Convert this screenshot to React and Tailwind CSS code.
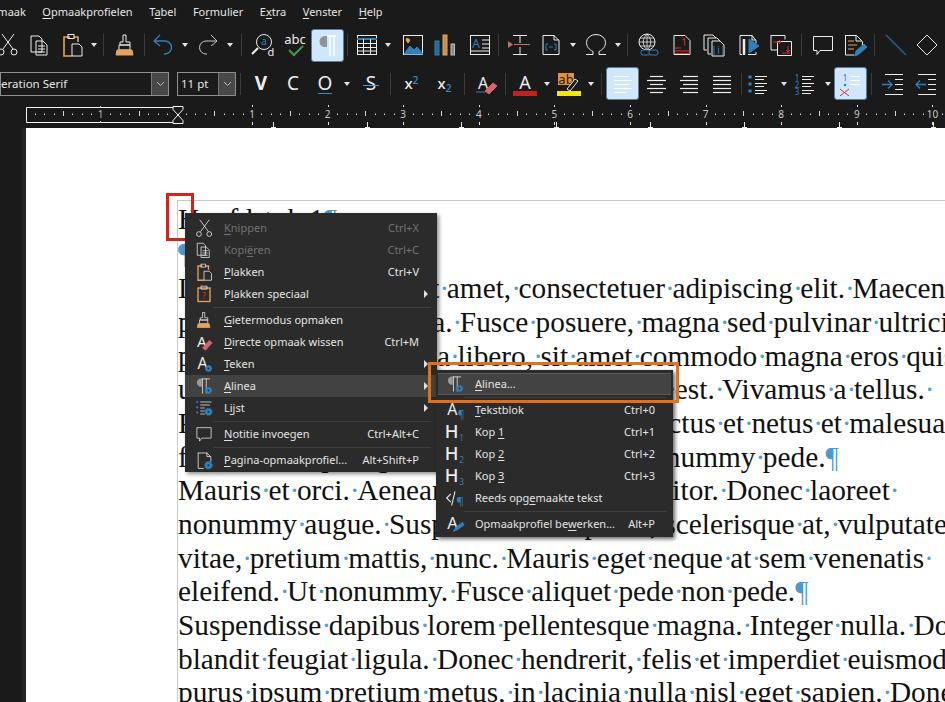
import React from "react";

const W = "#ececec";
const B = "#2f80bb";
const O = "#e3a35c";
const R = "#d8322c";
const ui = { fontFamily: "'Noto Sans', 'Open Sans', sans-serif" };

const S = ({ s = 24, w, h, children, vb }) => (
  <svg width={w || s} height={h || s} viewBox={vb || "0 0 24 24"} fill="none" stroke={W} strokeWidth="1" className="block flex-none">
    {children}
  </svg>
);
const T = ({ x, y, size = 12, fill = W, children, weight, italic, anchor = "middle" }) => (
  <text x={x} y={y} fontSize={size} fill={fill} stroke="none" textAnchor={anchor} fontWeight={weight} fontStyle={italic ? "italic" : undefined} fontFamily="'Noto Sans', sans-serif">
    {children}
  </text>
);
const Gear = ({ x = 18, y = 18, r = 3.6 }) => (
  <g>
    <circle cx={x} cy={y} r={r} fill={B} stroke={B} strokeWidth="1.6" strokeDasharray="1.4 1.2" />
    <circle cx={x} cy={y} r={r * 0.3} fill="#16324a" stroke="none" />
  </g>
);

const Cut = () => (<S><path d="M6 1 17 16M18 1 7 16" /><circle cx="5" cy="19" r="3" /><circle cx="18" cy="19" r="3" /></S>);
const Copy = () => (<S><path d="M3 3h8l3 3v13H3zM8 8h7l4 4v10H8zM10 13h7M10 16h7M10 19h7" fill="#1a1a1a" /></S>);
const Paste = () => (<S><path d="M10 4H4v19h8" stroke={O} strokeWidth="1.6" /><path d="M14 4h4v5" stroke={O} strokeWidth="1.6" /><rect x="8" y="1.500" width="6" height="4" stroke={W} /><path d="M12 11h7l3 3v9H12z" fill="#1a1a1a" /></S>);
const Brush = () => (<S><path d="M10 2h3v7h4v3H7V9h3z" /><path d="M6 12h11v5H6z" /><path d="M4 17h15l1 5H3z" fill={O} stroke={O} /></S>);
const Undo = () => (<S><path d="M3 8h11a6 6 0 0 1 0 13h-1M3 8l6-6M3 8l6 5" stroke={B} strokeWidth="1.4" /></S>);
const Redo = () => (<S><path d="M21 8H10a6 6 0 0 0 0 13h1M21 8l-6-6M21 8l-6 5" stroke="#c9c9c9" /></S>);
const Find = () => (<S><circle cx="13" cy="9" r="7.500" /><path d="M7 15 1 21" strokeWidth="2.200" /><T x="13" y="12" size="10" fill={B}>a</T><T x="20" y="23" size="11">d</T></S>);
const Abc = () => (<S><T x="12" y="11" size="13">abc</T><path d="M6 17l5 5 9-9" stroke="#3f9a4f" strokeWidth="2" /></S>);
const Pil = () => (<S><path d="M11 3H9a5.500 5.500 0 0 0 0 11h2z" fill="#8f9296" stroke="none" /><path d="M11 3h9M14 3v20M18 3v20" stroke="#fff" strokeWidth="1.500" /></S>);
const Table = () => (<S><rect x="2.500" y="2.500" width="19" height="19" /><path d="M2 6h20" stroke={B} strokeWidth="2" /><path d="M2 10.500h20M2 14.500h20M2 18h20M8.500 6v15M15.500 6v15" /></S>);
const Img = () => (<S><rect x="2.500" y="2.500" width="19" height="19" /><path d="M3 21l6-8 4 4 3-3 6 7z" fill={B} stroke={B} /><path d="M6 5l3 2-2 3-2-3z" fill={O} stroke={O} /></S>);
const Chart = () => (<S><rect x="2" y="8" width="4" height="14" stroke={B} fill={B} fillOpacity=".75" /><rect x="10" y="2" width="4" height="20" stroke={O} fill={O} fillOpacity=".85" /><rect x="18" y="11" width="3.500" height="11" stroke="#bbb" fill="#888" /></S>);
const TextBox = () => (<S><rect x="2.500" y="2.500" width="19" height="19" /><T x="8" y="15" size="12" fill={B}>A</T><path d="M14 7h7M14 11h7M14 15h7M3 18h18" /></S>);
const HGap = () => (<S><path d="M6 2.500h14M6 21.500h14M13 2v8M13 14v8" /><path d="M7 11.500h16" stroke="#c96b70" /><path d="M1 8l5 3.500-5 3.500z" fill="#c96b70" stroke="none" /></S>);
const Field = () => (<S><path d="M4 2.500h11l5 5v14H4z" /><path d="M15 2v5h5" /><path d="M7 11v6h2M17 11v6h-2M7 11h2M15 11h2M10 14h4" stroke={B} /></S>);
const Omega = () => (<S><path d="M2 21.500h7v-3c-4-2-6.500-5-6.500-9a9.500 8 0 0 1 19 0c0 4-2.500 7-6.500 9v3h7" /></S>);
const Globe = () => (<S><circle cx="10" cy="9" r="8" /><path d="M2 9h16M3 5h14M3 13h14M10 1v16M10 1c-5 5-5 11 0 16M10 1c5 5 5 11 0 16" strokeWidth=".8" /><rect x="4" y="17" width="9" height="5" rx="2" fill="#1a1a1a" stroke={B} /><rect x="12" y="17" width="9" height="5" rx="2" fill="#1a1a1a" stroke={B} /></S>);
const Foot = () => (<S><path d="M4 2.500h11l5 5v14H4z" /><T x="14" y="13" size="10" fill={R}>1</T><path d="M4 15h7M5 18h15M5 20.500h15" stroke={R} /></S>);
const End = () => (<S><path d="M1 2h9l3 3M1 2v15h3M5 5h9l3 3M5 5v16h3M9 8h8l4 4v11H9z" /><T x="15.500" y="21" size="10" fill={B}>i</T><path d="M11 13v9M20 13v9" stroke={B} /></S>);
const Mark = () => (<S><path d="M12 2.500H4v19h2M12 2.500h4l4 5v3M16 2v5h4M20 19v2.500H12" /><path d="M8 6v16" strokeWidth="2.500" /><path d="M13 6l10 7-10 7z" fill={B} stroke={B} /></S>);
const Cross = () => (<S><path d="M2 2.500h14v4M2 2v15h7" /><path d="M8.500 8.500h14v14h-14z" /><path d="M4 9h8l-2-2M12 9l-2 2M19 13v6l-2-2M19 19l2-2M13 20h8" stroke={R} /></S>);
const Comment = () => (<S><path d="M2.500 3.500h19v14H9l-3 4v-4H2.500z" /></S>);
const Track = () => (<S><path d="M2.500 2.500h11l6 6v6M19 8h-6V2M2.500 2v20h9" /><path d="M5 8h6M5 12h9M5 16h6" stroke={O} /><path d="M12 23l1-5 8-7 3 3-8 7z" fill={B} stroke={B} /></S>);
const LineI = () => (<S><path d="M2 2l20 20" stroke="#1e5f8c" strokeWidth="1.600" /></S>);
const Diamond = () => (<S><path d="M12 2l10 10-10 10L2 12z" /></S>);

const Arrow = () => (<div className="w-[12px] flex-none flex justify-center"><div className="border-x-[3.5px] border-t-[4px] border-x-transparent border-t-[#e6e6e6]" /></div>);
const Sep = ({ w = 8 }) => (<div className="flex justify-center flex-none" style={{ width: w }}><div className="w-px h-[22px] bg-[#3a3a3a]" /></div>);
const Slot = ({ w = 32, children, active }) => (
  <div className={"flex-none h-[33px] flex items-center justify-center " + (active ? "bg-[#cfe6fb] border border-[#5c7f99] rounded-[3px]" : "")} style={{ width: w }}>
    {children}
  </div>
);
const Gap = ({ w }) => <div className="flex-none" style={{ width: w }} />;

const Lines = ({ items, color = "#f0f0f0" }) => (
  <S>
    {items.map(([a, b, y], i) => (<path key={i} d={`M${a} ${y + 0.5}H${b}`} stroke={color} strokeWidth="1.200" />))}
  </S>
);
const AL = () => <Lines color="#ffffff" items={[[3, 18, 4], [3, 21, 8], [3, 18, 12], [3, 21, 16], [3, 15, 20]]} />;
const AC = () => <Lines items={[[6, 19, 4], [3, 22, 8], [6, 19, 12], [3, 22, 16], [6, 19, 20]]} />;
const AR = () => <Lines items={[[6, 21, 4], [3, 21, 8], [6, 21, 12], [3, 21, 16], [6, 21, 20]]} />;
const AJ = () => <Lines items={[[3, 21, 4], [3, 21, 8], [3, 21, 12], [3, 21, 16], [3, 21, 20]]} />;
const Bul = () => (<S><circle cx="4" cy="5" r="1.800" fill={B} stroke="none" /><circle cx="4" cy="12" r="1.800" fill={B} stroke="none" /><circle cx="4" cy="19" r="1.800" fill={B} stroke="none" /><path d="M9 4.500h12M9 7.500h9M9 11.500h12M9 14.500h9M9 18.500h12M9 21.500h9" /></S>);
const Num = () => (<S><T x="4" y="9" size="8" fill={B}>1</T><T x="4" y="16" size="8" fill={B}>2</T><T x="4" y="23" size="8" fill={B}>3</T><path d="M9 4.500h12M9 7.500h9M9 11.500h12M9 14.500h9M9 18.500h12M9 21.500h9" /></S>);
const NoNum = () => (<S><T x="6" y="9" size="8" fill={B}>1</T><circle cx="6" cy="13" r="1.300" fill={B} stroke="none" /><path d="M1 17l9 7M10 17l-9 7" stroke={R} /><path d="M11 4.500h10M11 8.500h10M11 12.500h10" stroke="#fff" /></S>);
const Indent = () => (<S><path d="M4 2.500h18M14 7.500h8M14 12.500h8M14 17.500h8M4 22.500h18" /><path d="M1 12.500h10M7 8.500l4 4-4 4" stroke={B} strokeWidth="1.300" /></S>);
const Outdent = () => (<S><path d="M4 2.500h18M14 7.500h8M14 12.500h8M14 17.500h8M4 22.500h18" /><path d="M12 12.500H2M6 8.500l-4 4 4 4" stroke={B} strokeWidth="1.300" /></S>);
const Erase = () => (<S><T x="9" y="17" size="16">A</T><path d="M2 20h9" stroke={B} /><path d="M11 19l8-8 4 3-8 8z" fill="#d9656b" stroke="#d9656b" /></S>);
const FontA = () => (<S><T x="12" y="17" size="18">A</T><rect x="0" y="19" width="24" height="5" fill="#c5211c" stroke="none" /></S>);
const High = () => (<S><rect x="1" y="1" width="16" height="12" fill="#e0933c" stroke="none" /><T x="9" y="12" size="13" fill="#222">ab</T><path d="M10 17l8-10 3 2-8 10z" fill="#1a1a1a" /><rect x="0" y="19" width="24" height="5" fill="#f2e51a" stroke="none" /></S>);

const Combo = ({ w, text, clip }) => (
  <div className="flex-none h-[24px] flex border border-[#8f8f8f] overflow-hidden" style={{ width: w }}>
    <div className={"flex-1 whitespace-nowrap text-[11.500px] leading-[22px] text-[#e6e6e6] " + (clip ? "-ml-[16px]" : "pl-[3px]")}>{text}</div>
    <div className="w-[17px] flex-none bg-[#484848] border-l border-[#777] flex items-center justify-center">
      <svg width="9" height="6" viewBox="0 0 9 6" fill="none" stroke="#bdbdbd"><path d="M1 1l3.500 3.500L8 1" /></svg>
    </div>
  </div>
);

function Toolbar1() {
  return (
    <div className="h-[42px] flex items-center -ml-[8px] flex-none">
      <Slot><Cut /></Slot><Slot><Copy /></Slot><Slot><Paste /></Slot><Arrow /><Sep w={6} /><Gap w={3} />
      <Slot><Brush /></Slot><Sep w={6} /><Slot><Undo /></Slot><Arrow /><Gap w={1} /><Slot><Redo /></Slot><Arrow /><Sep w={10} /><Gap w={3} />
      <Slot w={28}><Find /></Slot><Gap w={2} /><Slot w={32}><Abc /></Slot><Slot w={33} active><Pil /></Slot><Sep w={6} /><Gap w={2} />
      <Slot w={30}><Table /></Slot><Arrow /><Gap w={3} /><Slot><Img /></Slot><Slot w={32}><Chart /></Slot><Gap w={2} /><Slot w={34}><TextBox /></Slot><Sep w={2} /><Gap w={4} />
      <Slot><HGap /></Slot><Slot><Field /></Slot><Arrow /><Gap w={2} /><Slot w={30}><Omega /></Slot><Gap w={1} /><Arrow /><Sep w={6} /><Gap w={3} />
      <Slot w={32}><Globe /></Slot><Slot w={33}><Foot /></Slot><Slot w={33}><End /></Slot><Slot w={33}><Mark /></Slot><Slot w={33}><Cross /></Slot><Sep w={8} /><Gap w={2} />
      <Slot w={32}><Comment /></Slot><Slot w={32}><Track /></Slot><Sep w={6} /><Gap w={3} /><Slot w={32}><LineI /></Slot><Slot w={30}><Diamond /></Slot>
    </div>
  );
}
function Toolbar2() {
  return (
    <div className="h-[33px] flex items-center flex-none mt-[1px]" style={ui}>
      <Combo w={169} clip text="Liberation Serif" /><Gap w={8} /><Combo w={59} text="11 pt" /><Sep w={8} />
      <Gap w={1} /><Slot w={32}><span className="text-[#eee] text-[19px] leading-none font-bold">V</span></Slot><Slot w={32}><span className="text-[#eee] text-[19px] leading-none">C</span></Slot>
      <Slot w={32}><span className="text-[#eee] text-[19px] leading-none border-b border-[#3a8cc6]">O</span></Slot><Arrow />
      <Gap w={4} /><Slot w={28}><span className="relative text-[#eee] text-[19px] leading-none">S<span className="absolute left-[-3px] right-[-3px] top-[11px] h-px bg-[#4a98cf]" /></span></Slot><Sep w={10} />
      <Slot w={33}><span className="text-[#eee] text-[15px] font-medium">x<sup className="text-[10px] text-[#3a8cc6] -top-[5px]">2</sup></span></Slot>
      <Slot w={33}><span className="text-[#eee] text-[15px] font-medium">x<sub className="text-[10px] text-[#3a8cc6]">2</sub></span></Slot><Sep w={6} /><Gap w={3} /><Slot w={31}><Erase /></Slot><Sep w={8} />
      <Slot w={31}><FontA /></Slot><Gap w={1} /><Arrow /><Slot w={32}><High /></Slot><Arrow /><Sep w={9} />
      <Slot w={33} active><AL /></Slot><Slot w={33}><AC /></Slot><Slot w={33}><AR /></Slot><Slot w={33}><AJ /></Slot><Sep w={6} />
      <Slot w={28}><Bul /></Slot><Gap w={6} /><Arrow /><Slot w={30}><Num /></Slot><Gap w={2} /><Arrow /><Slot w={33} active><NoNum /></Slot><Sep w={9} />
      <Slot w={33}><Indent /></Slot><Slot w={33}><Outdent /></Slot>
    </div>
  );
}

function Ruler() {
  const zero = 176.4, step = 75.6;
  const dots = [];
  for (let i = -20; i < 100; i++) {
    const x = zero + (i * step) / 8;
    if (x < 28 || x > 945 || i % 8 === 0) continue;
    dots.push(<rect key={i} x={Math.round(x)} y={i % 4 === 0 ? 11 : 13.5} width="1" height={i % 4 === 0 ? 5 : 1.5} fill="#d8d8d8" />);
  }
  const nums = [1, 2, 3, 4, 5, 6, 7, 8, 9, 10];
  const tabs = [273, 367, 461, 556, 650, 744, 839, 933];
  return (
    <svg width="945" height="28" viewBox="0 0 945 28" className="block flex-none" fill="none">
      <path d="M26.500 7.500H174M26.500 7.500V22.500H174" stroke="#f4f4f4" />
      {dots}
      <text x="100.500" y="18" fontSize="10" fill="#bdbdbd" textAnchor="middle" fontFamily="'Noto Sans',sans-serif">1</text>
      <path d="M100.500 6v2M100.500 21v2" stroke="#ccc" />
      {nums.map((n) => {
        const x = zero + n * step;
        return (
          <g key={n}>
            <path d={`M${Math.round(x) + 0.5} 5v2M${Math.round(x) + 0.5} 22v3`} stroke="#e0e0e0" />
            <text x={x} y="18" fontSize="10" fill="#c8c8c8" textAnchor="middle" fontFamily="'Noto Sans',sans-serif">{n}</text>
          </g>
        );
      })}
      {tabs.map((x) => (<path key={x} d={`M${x + 0.5} 22v5M${x - 2} 27.500h5`} stroke="#e8e8e8" />))}
      <path d="M173 6.500h10v3L173 20.500v3h10v-3L173 9.500z" stroke="#f4f4f4" fill="#1a1a1a" />
    </svg>
  );
}

const Dot = () => <span className="inline-block w-[7.33px] text-center text-[#4f9fcf]">·</span>;
const Pilc = () => <span className="text-[#4a9ad0]">¶</span>;
function Line({ text, mark, trail }) {
  const parts = text.split(" ");
  return (
    <div className="h-[33.67px] leading-[33.67px] whitespace-nowrap">
      {parts.map((p, i) => (
        <React.Fragment key={i}>
          {i > 0 && <Dot />}
          {p}
        </React.Fragment>
      ))}
      {trail ? <Dot /> : null}
      {mark ? <Pilc /> : null}
    </div>
  );
}
const para1 = [
  ["Lorem ipsum dolor sit amet, consectetuer adipiscing elit. Maecenas", false, false],
  ["porttitor congue massa. Fusce posuere, magna sed pulvinar ultricies,", false, false],
  ["purus lectus malesuada libero, sit amet commodo magna eros quis", false, false],
  ["urna. Nunc viverra imperdiet enim. Fusce est. Vivamus a tellus.", false, true],
  ["Pellentesque habitant morbi tristique senectus et netus et malesuada", false, false],
  ["fames ac turpis egestas. Proin pharetra nonummy pede.", true, false],
  ["Mauris et orci. Aenean nec lorem. In porttitor. Donec laoreet", false, true],
  ["nonummy augue. Suspendisse dui purus, scelerisque at, vulputate", false, true],
  ["vitae, pretium mattis, nunc. Mauris eget neque at sem venenatis", false, true],
  ["eleifend. Ut nonummy. Fusce aliquet pede non pede.", true, false],
  ["Suspendisse dapibus lorem pellentesque magna. Integer nulla. Donec", false, false],
  ["blandit feugiat ligula. Donec hendrerit, felis et imperdiet euismod,", false, false],
  ["purus ipsum pretium metus, in lacinia nulla nisl eget sapien. Donec", false, false],
];

const TeA = () => (<S s={18}><T x="10" y="19" size="21">A</T><Gear x={18} y={18} r={4} /></S>);
const ParaG = () => (<S s={18}><path d="M8 2a5 5 0 0 0 0 11h1V2z" fill="#9a9a9a" stroke="none" /><path d="M9 2.500h11M10 2v20M15 2v20" /><Gear x={18} y={18} r={4} /></S>);
const ListG = () => (<S s={18}><circle cx="3" cy="4" r="1.500" fill={B} stroke="none" /><circle cx="3" cy="11" r="1.500" fill={B} stroke="none" /><circle cx="3" cy="18" r="1.500" fill={B} stroke="none" /><path d="M7 4h15M7 8h13M7 12h6M7 16h6M7 20h6" /><Gear x={18} y={17} r={4.500} /></S>);
const DocG = () => (<S s={19}><path d="M4 2.500h11l5 5v6M15 2v5h5M4 2v20h7" /><Gear x={17} y={18} r={4.500} /></S>);
const EraseM = () => (<S s={18}><T x="9" y="18" size="20">A</T><path d="M10 20l9-10 4 3-9 10z" fill="#d9656b" stroke="#d9656b" /></S>);

const Mi = ({ icon, label, u, sc, arrow, dis, hi, boxed }) => {
  const color = dis ? "text-[#727272]" : "text-[#e4e4e4]";
  return (
    <div className={"flex items-center h-[22px] pr-[18px] relative " + color + " " + (hi ? "bg-[#424242] " : "") + (boxed ? "bg-[#434343] border-y border-[#5a5a5a] mx-[2px] " : "")}>
      <div className={"w-[36px] flex justify-center flex-none " + (boxed ? "-ml-px" : "ml-px")}>{icon}</div>
      <div className="ml-[2px] flex-1 whitespace-nowrap">
        {label.slice(0, u)}<u className="underline-offset-2">{label.slice(u, u + 1)}</u>{label.slice(u + 1)}
      </div>
      {sc ? <div className="whitespace-nowrap">{sc}</div> : null}
      {arrow ? <div className="absolute right-[9px] top-[7px] border-y-[4px] border-l-[4px] border-y-transparent border-l-[#e0e0e0]" /> : null}
    </div>
  );
};
const MSep = () => (<div className="h-[4px] flex items-center pl-[28px] pr-[6px]"><div className="h-px w-full bg-[#3e3e3e]" /></div>);

const H = ({ n }) => (<S s={20}><T x="8" y="19" size="22" weight="500">H</T><T x="20" y="23" size="10" fill={B}>{n}</T></S>);
const APil = () => (<S s={19}><T x="8" y="18" size="20">A</T><T x="19" y="22" size="13" fill={B}>¶</T></S>);
const Pre = () => (<S s={20}><path d="M7 7l-5 5 5 5M12 4 8 21" strokeWidth="1.300" /><T x="18" y="20" size="14" fill={B}>¶</T></S>);
const APen = () => (<S s={20}><T x="9" y="18" size="20">A</T><path d="M10 21l3-5 8-6 2 3-8 6z" fill={B} stroke={B} /></S>);

export default function App() {
  return (
    <div className="relative w-[945px] h-[702px] overflow-hidden bg-[#1a1a1a] flex flex-col">
      <div className="h-[24px] flex items-center gap-[16.500px] -ml-[18px] text-[11px] text-[#e6e6e6] flex-none" style={ui}>
        <span>Opmaak</span>
        <span><u className="underline-offset-2">O</u>pmaakprofielen</span>
        <span>T<u className="underline-offset-2">a</u>bel</span>
        <span>Fo<u className="underline-offset-2">r</u>mulier</span>
        <span>E<u className="underline-offset-2">x</u>tra</span>
        <span><u className="underline-offset-2">V</u>enster</span>
        <span><u className="underline-offset-2">H</u>elp</span>
      </div>
      <Toolbar1 />
      <Toolbar2 />
      <Ruler />
      <div className="flex-1 flex min-h-0">
        <div className="w-[22px] flex-none" />
        <div className="w-[4px] flex-none bg-[#262626]" />
        <div className="flex-1 bg-white pl-[151px] pt-[72px] overflow-hidden">
          <div className="border-l border-t border-[#c9c9c9] text-[29.33px] text-[#111] h-[600px] pt-[2px]" style={{ fontFamily: "'Liberation Serif', serif" }}>
            <div className="h-[33.67px] leading-[33.67px] whitespace-nowrap">Hoofdstuk<Dot />1<Pilc /></div>
            <div className="h-[33.67px] leading-[33.67px]"><Pilc /></div>
            <div className="mt-[2px]">
              {para1.map(([t, m, tr], i) => (<Line key={i} text={t} mark={m} trail={tr} />))}
            </div>
          </div>
        </div>
      </div>

      <div className="absolute left-[166px] top-[193px] w-[28px] h-[48px] border-[3px] border-[#d8201c]" />

      <div className="absolute left-[185px] top-[213px] w-[252px] h-[259px] bg-[#2b2b2b] pt-[4px] text-[11px] shadow-[2px_2px_4px_rgba(0,0,0,0.45)]" style={ui}>
        <Mi icon={<S s={19}><path d="M6 1 17 16M18 1 7 16" /><circle cx="5" cy="19" r="3" /><circle cx="18" cy="19" r="3" /></S>} label="Knippen" u={0} sc="Ctrl+X" dis />
        <Mi icon={<S s={18}><path d="M3 3h8l3 3v13H3zM8 8h7l4 4v10H8zM10 13h7M10 16h7M10 19h7" /></S>} label="Kopiëren" u={4} sc="Ctrl+C" dis />
        <Mi icon={<S s={18}><path d="M10 4H4v19h8" stroke={O} strokeWidth="1.800" /><path d="M14 4h4v5" stroke={O} strokeWidth="1.800" /><rect x="8" y="1.500" width="6" height="4" /><path d="M12 11h7l3 3v9H12z" /></S>} label="Plakken" u={0} sc="Ctrl+V" />
        <Mi icon={<S s={18}><rect x="4" y="4" width="16" height="18" stroke={O} strokeWidth="1.800" /><rect x="8" y="1.500" width="8" height="4" /><T x="12" y="18" size="12" fill={R}>?</T></S>} label="Plakken speciaal" u={1} arrow />
        <MSep />
        <Mi icon={<S s={18}><path d="M10 2h3v7h4v3H7V9h3z" /><path d="M6 12h11v5H6z" /><path d="M4 17h15l1 5H3z" fill={O} stroke={O} /></S>} label="Gietermodus opmaken" u={0} />
        <Mi icon={<EraseM />} label="Directe opmaak wissen" u={0} sc="Ctrl+M" />
        <Mi icon={<TeA />} label="Teken" u={0} arrow />
        <Mi icon={<ParaG />} label="Alinea" u={0} arrow hi />
        <Mi icon={<ListG />} label="Lijst" u={1} arrow />
        <MSep />
        <Mi icon={<S s={18}><path d="M2.500 3.500h19v14H9l-3 4v-4H2.500z" /></S>} label="Notitie invoegen" u={0} sc="Ctrl+Alt+C" />
        <MSep />
        <Mi icon={<DocG />} label="Pagina-opmaakprofiel..." u={0} sc="Alt+Shift+P" />
      </div>

      <div className="absolute left-[436px] top-[370px] w-[237px] h-[167px] bg-[#2b2b2b] pt-[3px] text-[11px] shadow-[2px_2px_4px_rgba(0,0,0,0.6)]" style={ui}>
        <Mi icon={<ParaG />} label="Alinea..." u={0} boxed />
        <MSep />
        <Mi icon={<APil />} label="Tekstblok" u={0} sc="Ctrl+0" />
        <Mi icon={<H n="1" />} label="Kop 1" u={4} sc="Ctrl+1" />
        <Mi icon={<H n="2" />} label="Kop 2" u={4} sc="Ctrl+2" />
        <Mi icon={<H n="3" />} label="Kop 3" u={4} sc="Ctrl+3" />
        <Mi icon={<Pre />} label="Reeds opgemaakte tekst" u={9} />
        <MSep />
        <Mi icon={<APen />} label="Opmaakprofiel bewerken..." u={16} sc="Alt+P" />
      </div>

      <div className="absolute left-[428px] top-[362px] w-[251px] h-[41px] border-[3px] border-[#e0701a]" />
    </div>
  );
}
